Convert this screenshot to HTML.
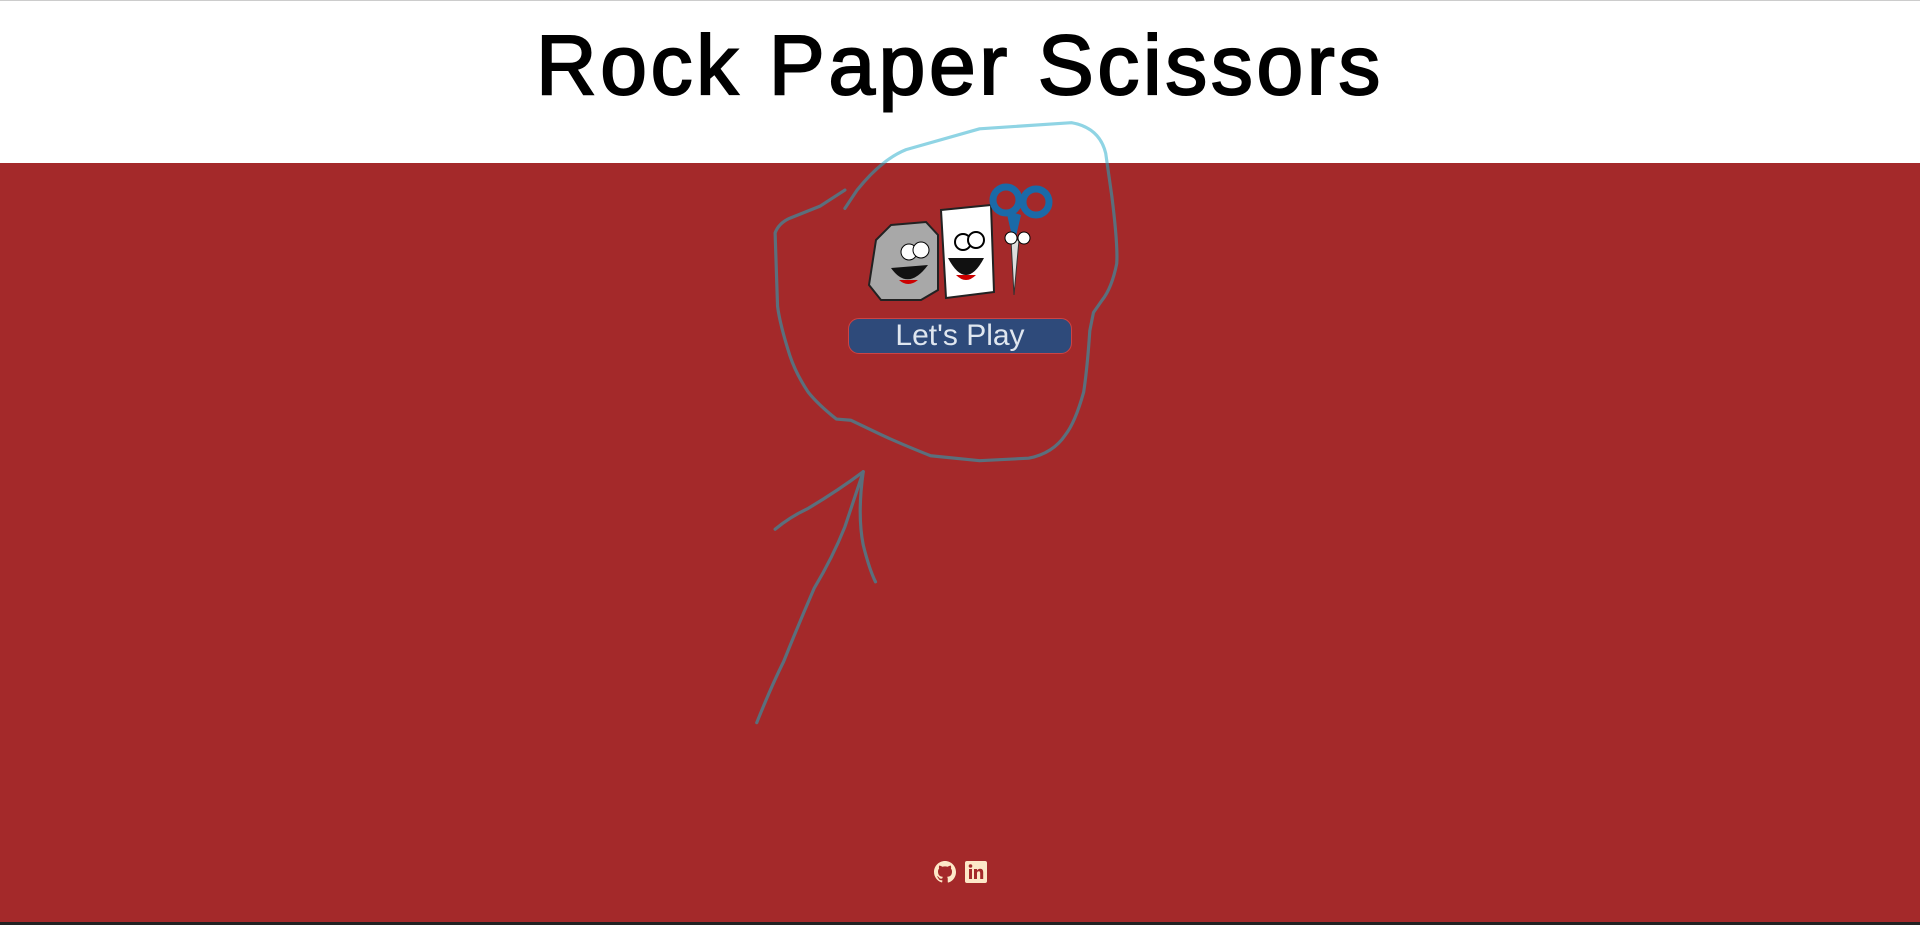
<!DOCTYPE html>
<html><head><meta charset="utf-8"><style>
html,body{margin:0;padding:0;width:1920px;height:925px;overflow:hidden;background:#a4292a;font-family:"Liberation Sans",sans-serif}
.hdr{position:absolute;left:0;top:0;width:1920px;height:163px;background:#fff;border-top:1px solid #ccc;box-sizing:border-box}
.title{position:absolute;left:0;width:1920px;top:16px;text-align:center;font-size:84px;color:#000;font-family:"Liberation Sans",sans-serif;letter-spacing:3.6px;-webkit-text-stroke:2px #000}
.btn{position:absolute;left:848px;top:318px;width:224px;height:36px;box-sizing:border-box;background:#2e4a7a;border:1px solid #c44;border-radius:11px;color:#dfe6ef;font-size:30px;text-align:center;line-height:34px}
.bot{position:absolute;left:0;top:922px;width:1920px;height:3px;background:#222}
</style></head><body>
<div class="hdr"><div class="title">Rock Paper Scissors</div></div>
<svg style="position:absolute;left:866px;top:180px" width="190" height="125" viewBox="0 0 190 125">
<path d="M10 60 L25 45 L60 42 L72 55 L72 110 L55 120 L15 120 L3 105 Z" fill="#a8a8a8" stroke="#222" stroke-width="2"/>
<circle cx="43" cy="72" r="8" fill="#fff" stroke="#000"/><circle cx="55" cy="70" r="8" fill="#fff" stroke="#000"/>
<path d="M25 88 Q42 112 62 85 Z" fill="#111"/><path d="M33 100 Q42 108 52 100 Z" fill="#c00"/>
<path d="M75 30 L125 25 L128 112 L80 118 Z" fill="#fff" stroke="#222" stroke-width="2"/>
<circle cx="97" cy="62" r="8" fill="#fff" stroke="#000" stroke-width="2"/><circle cx="110" cy="60" r="8" fill="#fff" stroke="#000" stroke-width="2"/>
<path d="M82 78 Q100 112 118 78 Z" fill="#111"/><path d="M90 95 Q100 105 110 95 Z" fill="#c00"/>
<circle cx="140" cy="20" r="13" fill="none" stroke="#1a6aa8" stroke-width="7"/><circle cx="170" cy="22" r="13" fill="none" stroke="#1a6aa8" stroke-width="7"/>
<path d="M140 30 L148 65 L155 35" fill="#1a6aa8"/><path d="M145 60 L148 115 L153 60 Z" fill="#ddd" stroke="#333"/>
<circle cx="145" cy="58" r="6" fill="#fff" stroke="#000"/><circle cx="158" cy="58" r="6" fill="#fff" stroke="#000"/>
</svg>
<div class="btn">Let's Play</div>
<svg style="position:absolute;left:0;top:0" width="1920" height="925" viewBox="0 0 1568 755" fill="none" stroke-linecap="round" stroke-linejoin="round">
<defs><clipPath id="t"><rect x="0" y="0" width="1568" height="133"/></clipPath><clipPath id="b"><rect x="0" y="133" width="1568" height="622"/></clipPath></defs>
<g id="d" stroke-width="2.6">
<path d="M690 170 L700 155 Q720 130 740 122 L800 105 L875 100 Q898 104 903 125 L908 160 Q913 200 912 215 Q908 235 900 245 L893 255 L890 270 Q888 300 885 320 Q878 345 870 355 Q860 370 840 374 L800 376 L760 372 Q735 362 720 355 L695 343 L683 342 Q668 330 660 320 Q650 305 645 290 Q637 265 635 250 L633 190 Q636 182 645 178 L670 168 L690 155"/>
<path d="M618 590 Q630 560 640 540 Q652 510 665 480 Q680 455 690 430 L705 385 Q700 420 705 445 Q710 465 715 475"/>
<path d="M633 432 Q645 422 660 415 Q685 400 705 385"/>
</g>
<use href="#d" stroke="#8fd4e4" clip-path="url(#t)"/>
<use href="#d" stroke="#5b6f7c" clip-path="url(#b)"/>
</svg>
<svg style="position:absolute;left:934px;top:861px" width="22" height="22" viewBox="0 0 16 16"><path fill="#fde8c8" d="M8 0C3.58 0 0 3.58 0 8c0 3.54 2.29 6.53 5.47 7.59.4.07.55-.17.55-.38v-1.33c-2.23.48-2.7-1.07-2.7-1.07-.36-.92-.89-1.17-.89-1.17-.73-.5.05-.49.05-.49.8.06 1.23.83 1.23.83.71 1.22 1.87.87 2.33.66.07-.52.28-.87.51-1.07-1.78-.2-3.64-.89-3.64-3.95 0-.87.31-1.59.82-2.15-.08-.2-.36-1.02.08-2.12 0 0 .67-.21 2.2.82a7.6 7.6 0 0 1 4 0c1.53-1.04 2.2-.82 2.2-.82.44 1.1.16 1.92.08 2.12.51.56.82 1.27.82 2.15 0 3.07-1.87 3.75-3.65 3.95.29.25.54.73.54 1.48v2.2c0 .21.15.46.55.38A8 8 0 0 0 16 8c0-4.42-3.58-8-8-8z"/></svg>
<svg style="position:absolute;left:965px;top:861px" width="22" height="22" viewBox="0 0 22 22"><rect width="22" height="22" rx="2" fill="#fde8c8"/><rect x="4" y="8" width="3" height="10" fill="#a4292a"/><circle cx="5.5" cy="5" r="1.8" fill="#a4292a"/><path d="M9 8h3v1.5c.6-1 1.7-1.8 3.2-1.8 2.3 0 3 1.5 3 3.8V18h-3v-5.8c0-1.2-.4-1.9-1.4-1.9-1.1 0-1.8.7-1.8 2V18H9z" fill="#a4292a"/></svg>
<div class="bot"></div>
</body></html>
